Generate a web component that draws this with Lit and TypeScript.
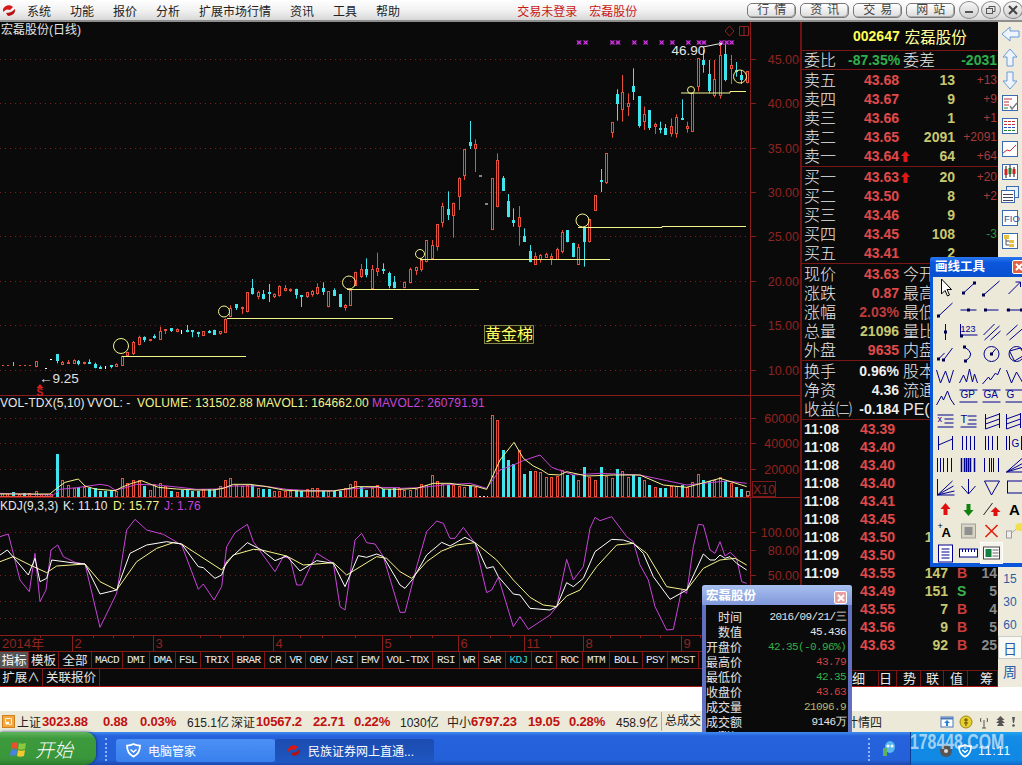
import { LitElement, html, css, svg, nothing } from 'lit';
import { customElement } from 'lit/decorators.js';

// chart data was read from 3x crops, so coordinates are kept in crop units and converted below
type C = [number, number, number, number, number, 'r' | 'c'];

const CANDLES_L: C[] = [
  [107, 484, 484, 500, 502, 'r'], [172, 462, 464, 483, 490, 'c'], [187, 483, 487, 493, 495, 'r'],
  [203, 480, 488, 490, 492, 'r'], [221, 478, 482, 490, 492, 'r'], [235, 480, 484, 491, 496, 'c'],
  [253, 485, 487, 491, 493, 'r'], [268, 478, 487, 490, 492, 'c'], [286, 488, 492, 502, 505, 'c'],
  [301, 497, 502, 505, 507, 'c'], [334, 495, 496, 500, 505, 'c'], [349, 490, 494, 499, 501, 'r'],
  [367, 467, 469, 495, 497, 'r'], [382, 455, 457, 467, 469, 'r'], [400, 423, 427, 460, 465, 'r'],
  [416, 407, 413, 434, 436, 'r'], [433, 409, 412, 417, 426, 'c'], [449, 417, 418, 422, 424, 'r'],
  [463, 403, 410, 413, 416, 'c'], [481, 380, 393, 416, 418, 'r'], [496, 387, 389, 392, 402, 'r'],
  [514, 384, 385, 392, 396, 'c'], [530, 385, 388, 395, 397, 'r'], [562, 375, 390, 393, 397, 'c'],
  [577, 390, 392, 394, 412, 'c'], [595, 395, 397, 400, 411, 'c'], [610, 393, 393, 404, 406, 'r'],
  [628, 390, 393, 395, 400, 'c'], [643, 389, 392, 403, 405, 'c'], [660, 393, 394, 401, 404, 'r'],
  [676, 355, 357, 395, 397, 'r'], [691, 316, 325, 350, 352, 'r'], [709, 312, 314, 323, 330, 'c'],
  [725, 320, 322, 326, 342, 'r'], [742, 278, 278, 335, 337, 'r'], [757, 237, 265, 280, 284, 'c'],
  [775, 272, 277, 290, 298, 'r'], [790, 270, 283, 294, 298, 'c'], [808, 252, 278, 280, 306, 'c'],
  [823, 280, 283, 290, 294, 'r'], [838, 256, 260, 288, 290, 'r'], [856, 255, 264, 270, 274, 'r'],
  [870, 265, 268, 272, 276, 'r'], [889, 266, 268, 282, 296, 'c'], [904, 285, 286, 288, 321, 'c'],
  [922, 276, 278, 290, 294, 'r'], [937, 270, 275, 285, 290, 'r'], [952, 250, 262, 280, 284, 'r'],
  [969, 247, 264, 272, 285, 'c'], [985, 274, 275, 320, 322, 'r'], [1003, 265, 270, 284, 288, 'c'],
  [1019, 282, 284, 320, 322, 'c'], [1036, 312, 315, 320, 332, 'r'], [1051, 268, 270, 315, 316, 'r'],
  [1066, 215, 218, 256, 258, 'r'], [1084, 192, 208, 230, 234, 'r'], [1099, 175, 208, 224, 232, 'c'],
  [1117, 195, 208, 264, 266, 'r'], [1132, 158, 205, 213, 228, 'r'], [1150, 190, 208, 210, 222, 'c'],
  [1166, 215, 220, 255, 265, 'c'], [1183, 228, 248, 262, 265, 'c'],
];

const CANDLES_R: C[] = [
  [13, 785, 787, 803, 805, 'r'], [30, 743, 748, 788, 790, 'r'], [47, 740, 743, 752, 765, 'r'],
  [63, 715, 722, 748, 755, 'r'], [79, 660, 662, 725, 727, 'r'], [96, 660, 676, 714, 716, 'r'],
  [112, 612, 614, 680, 692, 'r'], [127, 548, 558, 605, 622, 'r'], [145, 514, 568, 582, 600, 'c'],
  [160, 548, 550, 587, 653, 'r'], [178, 472, 474, 527, 570, 'r'], [193, 388, 388, 465, 480, 'r'],
  [211, 303, 367, 376, 387, 'c'], [226, 358, 373, 384, 456, 'r'], [275, 475, 476, 628, 630, 'r'],
  [292, 400, 422, 560, 562, 'r'], [308, 468, 474, 510, 512, 'c'], [325, 522, 544, 590, 592, 'c'],
  [340, 565, 600, 607, 620, 'c'], [358, 558, 592, 620, 677, 'r'], [373, 625, 648, 662, 664, 'c'],
  [389, 675, 693, 722, 727, 'c'], [406, 697, 709, 733, 735, 'r'], [421, 702, 707, 718, 728, 'r'],
  [439, 698, 702, 710, 713, 'r'], [454, 700, 708, 714, 735, 'r'], [472, 683, 687, 716, 718, 'r'],
  [487, 630, 636, 692, 700, 'r'], [502, 630, 632, 665, 667, 'c'], [520, 668, 670, 708, 712, 'c'],
  [535, 672, 682, 732, 734, 'r'], [553, 622, 624, 662, 740, 'c'], [568, 597, 599, 665, 668, 'r'],
  [586, 526, 526, 571, 573, 'r'], [602, 447, 480, 484, 516, 'c'], [617, 400, 400, 487, 492, 'r'],
  [635, 306, 306, 336, 353, 'r'], [650, 208, 222, 248, 302, 'c'], [667, 165, 216, 268, 305, 'r'],
  [683, 220, 250, 260, 288, 'r'], [700, 145, 198, 212, 240, 'c'], [716, 228, 230, 318, 323, 'c'],
  [733, 260, 283, 303, 330, 'r'], [748, 270, 270, 320, 330, 'c'], [764, 308, 314, 320, 342, 'r'],
  [780, 305, 326, 328, 340, 'c'], [796, 312, 324, 342, 344, 'c'], [813, 295, 320, 340, 350, 'r'],
  [829, 283, 292, 340, 353, 'r'], [847, 238, 296, 298, 300, 'c'], [862, 305, 320, 325, 338, 'r'],
  [877, 218, 220, 334, 336, 'r'], [895, 114, 116, 200, 214, 'r'], [910, 90, 120, 132, 158, 'c'],
  [928, 120, 162, 210, 220, 'c'], [943, 120, 177, 226, 232, 'r'], [961, 75, 105, 226, 236, 'r'],
  [976, 70, 102, 176, 184, 'c'], [992, 105, 135, 144, 192, 'r'], [1008, 126, 150, 152, 170, 'c'],
  [1024, 150, 165, 177, 192, 'c'], [1042, 153, 155, 188, 190, 'r'],
];

type V = [number, number, 'r' | 'c'];
const VOL_L: V[] = [
  [5, 310, 'r'], [22, 310, 'r'], [40, 308, 'c'], [57, 312, 'r'], [72, 310, 'c'], [87, 310, 'r'], [107, 305, 'r'],
  [122, 312, 'r'], [137, 312, 'r'], [152, 312, 'r'], [172, 192, 'c'], [187, 270, 'r'], [203, 285, 'r'],
  [221, 295, 'r'], [235, 292, 'c'], [253, 292, 'r'], [268, 295, 'c'], [286, 295, 'c'], [301, 303, 'c'],
  [315, 303, 'c'], [334, 300, 'c'], [349, 303, 'r'], [367, 265, 'r'], [382, 280, 'r'], [400, 272, 'r'],
  [416, 272, 'r'], [433, 288, 'c'], [449, 300, 'r'], [463, 282, 'r'], [481, 280, 'r'], [496, 290, 'r'],
  [514, 305, 'c'], [530, 308, 'r'], [545, 302, 'c'], [562, 302, 'c'], [577, 303, 'c'], [595, 305, 'c'],
  [610, 298, 'r'], [628, 298, 'c'], [643, 298, 'c'], [660, 290, 'r'], [676, 270, 'r'], [691, 265, 'r'],
  [709, 285, 'r'], [725, 290, 'r'], [742, 285, 'r'], [757, 285, 'c'], [775, 295, 'r'], [790, 298, 'c'],
  [808, 298, 'c'], [823, 305, 'r'], [838, 305, 'r'], [856, 305, 'r'], [870, 305, 'r'], [889, 300, 'c'],
  [904, 303, 'c'], [922, 298, 'r'], [937, 295, 'r'], [952, 295, 'r'], [969, 305, 'c'], [985, 305, 'r'],
  [1003, 305, 'c'], [1019, 305, 'c'], [1036, 295, 'r'], [1051, 283, 'r'], [1066, 273, 'r'], [1084, 292, 'c'],
  [1099, 300, 'c'], [1117, 295, 'r'], [1132, 285, 'r'], [1150, 298, 'c'], [1166, 298, 'c'], [1183, 296, 'c'],
  [1198, 296, 'r'],
];
const VOL_R: V[] = [
  [13, 300, 'r'], [30, 300, 'r'], [47, 298, 'r'], [63, 283, 'r'], [79, 285, 'r'], [96, 255, 'r'], [112, 275, 'r'],
  [127, 283, 'r'], [145, 285, 'c'], [160, 285, 'r'], [178, 288, 'r'], [193, 292, 'r'], [211, 288, 'c'],
  [226, 292, 'r'], [275, 75, 'r'], [292, 90, 'r'], [308, 180, 'c'], [325, 210, 'c'], [340, 222, 'c'],
  [358, 180, 'r'], [373, 252, 'c'], [389, 245, 'c'], [406, 245, 'r'], [421, 248, 'r'], [439, 263, 'r'],
  [454, 263, 'r'], [472, 258, 'r'], [487, 240, 'r'], [502, 255, 'c'], [520, 255, 'c'], [535, 270, 'r'],
  [553, 232, 'c'], [568, 263, 'r'], [586, 270, 'r'], [602, 232, 'c'], [617, 260, 'r'], [635, 265, 'r'],
  [650, 238, 'c'], [667, 245, 'r'], [683, 262, 'r'], [700, 255, 'c'], [716, 263, 'c'], [733, 272, 'r'],
  [748, 285, 'c'], [764, 292, 'r'], [780, 295, 'c'], [796, 295, 'c'], [813, 288, 'r'], [829, 288, 'r'],
  [847, 285, 'c'], [862, 292, 'r'], [877, 277, 'r'], [895, 252, 'r'], [910, 270, 'c'], [928, 275, 'c'],
  [943, 270, 'r'], [961, 262, 'r'], [976, 275, 'c'], [992, 280, 'r'], [1008, 293, 'c'], [1024, 297, 'c'],
  [1042, 305, 'r'],
];

type P = [number, number][];
const VOL_YELLOW_L: P = [[0,312],[150,312],[170,295],[195,277],[235,267],[255,288],[285,297],[345,302],[365,292],[395,280],[425,272],[445,280],[475,292],[530,297],[590,300],[640,300],[670,295],[700,283],[750,283],[800,290],[850,300],[900,303],[1000,303],[1050,295],[1070,290],[1135,290],[1150,297],[1200,298]];
const VOL_MAGENTA_L: P = [[0,310],[160,315],[180,298],[230,293],[300,283],[325,287],[345,300],[370,295],[410,283],[470,285],[540,292],[590,298],[650,297],[700,288],[790,288],[860,298],[930,302],[1000,302],[1060,296],[1130,292],[1200,293]];
const VOL_YELLOW_R: P = [[0,298],[50,295],[100,280],[150,280],[185,285],[225,288],[260,298],[300,210],[342,157],[370,205],[400,228],[425,240],[445,253],[480,255],[500,245],[560,258],[640,255],[720,255],[790,285],[860,292],[960,265],[1040,290]];
const VOL_MAGENTA_R: P = [[0,295],[60,293],[130,285],[210,280],[260,295],[300,240],[340,225],[370,212],[420,195],[455,232],[520,255],[600,250],[720,255],[800,272],[860,285],[980,273],[1040,280]];

const J_L: P = [[0,440],[25,432],[60,570],[88,605],[105,490],[120,635],[138,600],[153,480],[173,465],[190,500],[225,517],[255,522],[300,712],[350,610],[380,420],[405,388],[440,420],[490,433],[545,465],[595,598],[610,582],[642,630],[665,590],[680,470],[705,428],[742,403],[760,455],[825,545],[850,500],[870,505],[890,585],[905,585],[950,490],[1000,520],[1020,650],[1035,660],[1065,450],[1085,430],[1100,458],[1125,462],[1150,500],[1200,667]];
const K_L: P = [[0,495],[22,480],[85,555],[105,505],[120,575],[140,565],[155,510],[230,520],[255,522],[300,612],[350,600],[390,490],[440,465],[500,455],[545,462],[595,530],[610,533],[645,565],[665,555],[680,515],[742,458],[785,480],[825,512],[860,498],[900,543],[950,512],[1000,520],[1035,590],[1075,497],[1100,502],[1130,492],[1150,500],[1200,585]];
const D_L: P = [[0,515],[40,500],[90,525],[140,548],[170,528],[255,522],[300,575],[350,600],[410,515],[470,475],[520,458],[545,462],[665,540],[700,495],[760,478],[785,480],[860,498],[910,525],[1000,518],[1040,555],[1130,500],[1160,505],[1200,545]];
const J_R: P = [[0,667],[15,667],[50,530],[80,425],[110,393],[130,400],[150,445],[165,445],[190,412],[225,460],[260,608],[275,600],[295,562],[340,710],[360,680],[385,718],[450,675],[470,650],[500,508],[520,570],[550,530],[570,415],[585,382],[600,392],[635,380],[680,440],[700,455],[720,525],[745,570],[765,650],[800,720],[820,718],[845,600],[860,610],[880,470],[895,403],[910,405],[930,480],[945,490],[960,455],[975,498],[990,487],[1010,505],[1025,575],[1040,580]];
const K_R: P = [[0,585],[15,595],[40,565],[80,495],[125,457],[150,468],[195,442],[225,458],[260,535],[280,530],[295,560],[340,612],[360,615],[390,655],[450,660],[470,650],[500,578],[520,590],[550,565],[585,485],[635,448],[670,450],[700,460],[730,490],[760,560],[810,628],[860,600],[910,492],[930,510],[945,510],[960,495],[975,505],[990,500],[1010,520],[1040,540]];
const D_R: P = [[0,545],[35,565],[80,515],[125,483],[170,465],[225,458],[290,510],[340,570],[390,622],[430,645],[470,650],[500,618],[540,600],[590,530],[650,465],[700,460],[740,490],[800,590],[860,600],[910,535],[960,510],[1005,505],[1040,525]];

const pts = (p: P, ox: number, oy: number) => p.map(([x, y]) => `${ox + x / 3},${oy + y / 3}`).join(' ');

const RED = '#e8503c';
const CYAN = '#3fe4ec';
const YEL = '#f4f48c';
const MAG = '#c844d8';
const AXIS = '#8a1c1c';

// strokes sit on half pixels so the hollow bars stay as bright as in the reference
function candle([zx, wt, bt, bb, wb, col]: C, ox: number, oy: number) {
  const x = Math.round(ox + zx / 3) + 0.5;
  const c = col === 'r' ? RED : CYAN;
  const top = Math.floor(oy + bt / 3) + 0.5;
  const h = Math.max(Math.round((bb - bt) / 3), 1);
  return svg`
    <line x1=${x} x2=${x} y1=${oy + wt / 3} y2=${oy + wb / 3} stroke=${c} />
    ${col === 'r'
      ? svg`<rect x=${x - 1} y=${top} width="2" height=${h} fill="#0a0a0a" stroke=${c} />`
      : svg`<rect x=${x - 1.5} y=${top - 0.5} width="3" height=${h + 1} fill=${c} />`}
  `;
}

function volBar([zx, top, col]: V, ox: number) {
  const x = Math.round(ox + zx / 3) + 0.5;
  const y = Math.floor(390 + top / 3) + 0.5;
  const h = 496.5 - y;
  return col === 'r'
    ? svg`<rect x=${x - 1} y=${y} width="2" height=${h} fill="#0a0a0a" stroke=${RED} />`
    : svg`<rect x=${x - 1.5} y=${y - 0.5} width="3" height=${h + 1} fill=${CYAN} />`;
}

const PRICE_AXIS: [string, number][] = [['45.00', 59.5], ['40.00', 103.5], ['35.00', 148.5], ['30.00', 192.5], ['25.00', 236.5], ['20.00', 281.5], ['15.00', 325.5], ['10.00', 370.5]];
const VOL_AXIS: [string, number][] = [['60000', 418.5], ['40000', 443.5], ['20000', 469.5]];
const KDJ_AXIS: [string, number][] = [['100.00', 532.5], ['80.00', 550.5], ['50.00', 575.5]];
const MONTHS: [string, number][] = [['2', 72.5], ['3', 153.5], ['4', 273.5], ['5', 382.5], ['6', 458.5], ['11', 524.5], ['8', 583.5], ['9', 681.5]];
const CROSSES = [537, 557, 637, 654, 703, 737, 785, 817, 865, 897, 912, 965, 980, 995];

@customElement('chart-view')
export class ChartView extends LitElement {
  static styles = css`
    :host { display: block; width: 800px; height: 629px; }
    svg { display: block; font-family: "Liberation Sans", "Noto Sans CJK SC", sans-serif; }
    .axis { fill: #8f2420; font-size: 12.5px; text-anchor: end; }
    .info { font-size: 12px; letter-spacing: 0.1px; }
    .poly { fill: none; stroke-width: 1; }
    .grid { stroke: #7a2020; stroke-dasharray: 1 4; }
  `;

  render() {
    return html`<svg width="800" height="629" viewBox="0 22 800 629">
      <rect x="0" y="22" width="800" height="629" fill="#0a0a0a" />
      ${[...PRICE_AXIS, ...VOL_AXIS, ...KDJ_AXIS, ['', 601.5] as [string, number], ['', 618.5] as [string, number]].map(([, y]) =>
        svg`<line class="grid" x1="0" x2="750" y1=${y} y2=${y} />`)}
      <line x1="0" x2="800" y1="395.5" y2="395.5" stroke=${AXIS} />
      <line x1="0" x2="800" y1="497.5" y2="497.5" stroke=${AXIS} />
      <line x1="0" x2="800" y1="635.5" y2="635.5" stroke=${AXIS} />
      <line x1="750.5" x2="750.5" y1="22" y2="636" stroke=${AXIS} />

      ${[...PRICE_AXIS, ...VOL_AXIS, ...KDJ_AXIS].map(([t, y]) => svg`
        <line x1="751" x2="756" y1=${y} y2=${y} stroke=${AXIS} />
        <text class="axis" x="799" y=${y + 4.5}>${t}</text>`)}

      <text x="1" y="34" fill="#e4e4e4" font-size="12">宏磊股份(日线)</text>

      ${[5, 22, 57, 72, 87].map((zx) => svg`<rect x=${Math.round(zx / 3)} y="365" width="2" height="1" fill=${RED} />`)}
      <line x1="13.5" x2="13.5" y1="362" y2="366" stroke=${CYAN} />
      <rect x="50" y="359" width="2" height="1" fill="#fff" />
      <rect x="45" y="368" width="2" height="1" fill="#fff" />
      <rect x="105" y="366" width="1" height="3" fill="#fff" />
      <rect x="181" y="330" width="1" height="4" fill="#fff" />
      <rect x="479" y="175.5" width="3" height="1" fill="#fff" />
      <rect x="485" y="203.5" width="3" height="1" fill="#fff" />
      ${CANDLES_L.map((c) => candle(c, 0, 200))}
      ${CANDLES_R.map((c) => candle(c, 400, 20))}

      <g fill="none" stroke=${YEL}>
        <line x1="122" x2="246" y1="356.5" y2="356.5" />
        <line x1="227" x2="393" y1="318.5" y2="318.5" />
        <line x1="347" x2="479" y1="289.5" y2="289.5" />
        <line x1="420" x2="610" y1="259.5" y2="259.5" />
        <path d="M578 227.5H662V226.5H746" />
        <path d="M681 93H730V91.5H746" />
        <circle cx="121" cy="346" r="7.5" />
        <circle cx="224" cy="311.5" r="5.5" />
        <circle cx="349" cy="282.5" r="6.5" />
        <circle cx="420" cy="254" r="4.5" />
        <circle cx="582.5" cy="220.5" r="6.5" />
        <circle cx="691" cy="90" r="3.5" />
        <circle cx="740" cy="76.5" r="6.5" />
      </g>

      ${CROSSES.map((z) => {
        const x = 400 + z / 3;
        return svg`<rect x=${x - 2} y="40.5" width="4" height="4" fill="#8a1a9a" />
          <path d="M${x - 2} 40.5l4 4m0 -4l-4 4" stroke="#e040f0" fill="none" />`;
      })}
      <text x="671.500" y="54.500" fill="#e8e8e8" font-size="13.500">46.90</text>
      <path d="M703 47L718 44H722M719 42.5l3 1.5l-3 1.5" stroke="#e8e8e8" fill="none" />
      <path d="M729.5 26l4.5 5l-4.5 5l-4.5-5z" stroke="#8f2420" fill="none" />
      <path d="M739.5 26.5h9v9h-9zM744 26.5v9" stroke="#8f2420" fill="none" />

      <text x="39" y="383" fill="#e0e0e0" font-size="13.500">←9.25</text>
      <path d="M40 384l3.5 4h-7z" fill="#d02020" />
      <text x="36.5" y="396" fill="#d02020" font-size="10" font-weight="700">S</text>
      <g>
        <rect x="484.5" y="325.5" width="49" height="18" fill="#141400" stroke="#b8b870" stroke-width="0.7" />
        <text x="485" y="340" fill="#ffff66" font-size="16">黄金梯</text>
      </g>

      <!-- volume pane -->
      <g class="info">
        <text x="0" y="407" fill="#e8e8e8">VOL-TDX(5,10)</text>
        <text x="87" y="407" fill="#e8e8e8">VVOL: -</text>
        <text x="137" y="407" fill=${YEL}>VOLUME: 131502.88</text>
        <text x="256" y="407" fill=${YEL}>MAVOL1: 164662.00</text>
        <text x="372" y="407" fill=${MAG}>MAVOL2: 260791.91</text>
      </g>
      ${VOL_L.map((v) => volBar(v, 0))}
      ${VOL_R.map((v) => volBar(v, 400))}
      <line x1="0" x2="52" y1="496.5" y2="496.5" stroke=${RED} />
      <path d="M479 496.5h9" stroke="#ddd" stroke-dasharray="2 2" />
      <rect x="746.5" y="491.5" width="3" height="4" fill="#0a0a0a" stroke="#ddd" stroke-dasharray="1 1" />
      <polyline class="poly" stroke=${MAG} points=${pts(VOL_MAGENTA_L, 0, 390)} />
      <polyline class="poly" stroke=${MAG} points=${pts(VOL_MAGENTA_R, 400, 390)} />
      <polyline class="poly" stroke=${YEL} points=${pts(VOL_YELLOW_L, 0, 390)} />
      <polyline class="poly" stroke=${YEL} points=${pts(VOL_YELLOW_R, 400, 390)} />
      <rect x="752.5" y="481.5" width="23" height="15" fill="none" stroke="#7a1a1a" />
      <text x="753" y="494" fill="#8f2420" font-size="12.5">X10</text>

      <!-- kdj pane -->
      <g class="info">
        <text x="0" y="510" fill="#e8e8e8">KDJ(9,3,3)</text>
        <text x="63" y="510" fill="#e8e8e8">K: 11.10</text>
        <text x="113" y="510" fill=${YEL}>D: 15.77</text>
        <text x="164" y="510" fill=${MAG}>J: 1.76</text>
      </g>
      <polyline class="poly" stroke=${MAG} points=${pts(J_L, 0, 390)} />
      <polyline class="poly" stroke=${MAG} points=${pts(J_R, 400, 390)} />
      <polyline class="poly" stroke=${YEL} points=${pts(D_L, 0, 390)} />
      <polyline class="poly" stroke=${YEL} points=${pts(D_R, 400, 390)} />
      <polyline class="poly" stroke="#fff" points=${pts(K_L, 0, 390)} />
      <polyline class="poly" stroke="#fff" points=${pts(K_R, 400, 390)} />

      <!-- date axis -->
      <text x="2" y="648" fill="#8f2420" font-size="13">2014年</text>
      ${MONTHS.map(([t, x]) => svg`
        <line x1=${x} x2=${x} y1="636" y2="651" stroke=${AXIS} />
        <text x=${x + 2} y="648" fill="#8f2420" font-size="13">${t}</text>`)}
      ${[40.5, 93.5, 113.5, 133.5, 200.5, 220.5, 243.5, 300.5, 322.5, 355.5, 410.5, 432.5, 490.5, 510.5, 550.5, 610.5, 640.5, 660.5, 700.5, 720.5].map((x) =>
        svg`<line x1=${x} x2=${x} y1="636" y2="638" stroke=${AXIS} />`)}
    </svg>`;
  }
}

const TABS: [string, number][] = [
  ['指标', 29], ['模板', 30], ['全部', 33], ['MACD', 31], ['DMI', 27], ['DMA', 26], ['FSL', 25], ['TRIX', 32], ['BRAR', 32],
  ['CR', 21], ['VR', 20], ['OBV', 26], ['ASI', 26], ['EMV', 25], ['VOL-TDX', 50], ['RSI', 27], ['WR', 19], ['SAR', 27],
  ['KDJ', 26], ['CCI', 25], ['ROC', 26], ['MTM', 27], ['BOLL', 33], ['PSY', 25], ['MCST', 31],
];

const SELLS = [
  ['卖五', '43.68', '', '13', '+13', ''], ['卖四', '43.67', '', '9', '+9', ''], ['卖三', '43.66', '', '1', '+1', ''],
  ['卖二', '43.65', '', '2091', '+2091', ''], ['卖一', '43.64', 'up', '64', '+64', ''],
];
const BUYS = [
  ['买一', '43.63', 'up', '20', '+20', ''], ['买二', '43.50', '', '8', '+2', ''], ['买三', '43.46', '', '9', '', ''],
  ['买四', '43.45', '', '108', '-3', 'g'], ['买五', '43.41', '', '2', '', ''],
];
const STATS = [
  ['现价', '43.63', 'red', '今开'], ['涨跌', '0.87', 'red', '最高'], ['涨幅', '2.03%', 'dim', '最低'],
  ['总量', '21096', 'khaki', '量比'], ['外盘', '9635', 'red', '内盘'],
];
const STATS2 = [['换手', '0.96%', '股本'], ['净资', '4.36', '流通'], ['收益㈡', '-0.184', 'PE(动)']];
// the last rows have their time column under the floating window, so it is left empty
const TICKS = [
  ['11:08', '43.39', '', '', ''], ['11:08', '43.40', '', '', ''], ['11:08', '43.40', '', '', ''], ['11:08', '43.40', '', '', ''],
  ['11:08', '43.41', '', '', ''], ['11:08', '43.45', '', '', ''], ['11:08', '43.50', '108', '', ''], ['11:09', '43.50', '', '', ''],
  ['11:09', '43.55', '147', 'B', '14'], ['', '43.49', '151', 'S', '5'], ['', '43.55', '7', 'B', '4'],
  ['', '43.56', '9', 'B', '5'], ['', '43.63', '92', 'B', '25'],
];
const PANEL_TABS: [string, number][] = [['细', 77], ['日', 18], ['势', 24], ['联', 23], ['值', 24], ['筹', 30]];

// right hand vertical toolbar, top to bottom
const SIDE_ICONS = [
  svg`<path d="M3 11l8-7v4h9v6h-9v4z" fill="#eef4fc" stroke="#6a9ad8" />`,
  svg`<path d="M11 3l7 8h-4v9H8v-9H4z" fill="#eef4fc" stroke="#6a9ad8" />`,
  svg`<path d="M11 20l-7-8h4V3h6v9h4z" fill="#eef4fc" stroke="#6a9ad8" />`,
  svg`<rect x="3.500" y="3.500" width="15" height="15" fill="#fff" stroke="#3a6ab0" /><path d="M5 7h8M5 10h5M5 13h5" stroke="#c03030" /><path d="M5 16h4" stroke="#208030" /><path d="M11 14l2 3 5-6" stroke="#808080" fill="none" stroke-width="1.5" />`,
  svg`<rect x="3.500" y="3.500" width="15" height="15" fill="#fff" stroke="#3a6ab0" /><path d="M5 6.500h12M5 9.500h12" stroke="#c03030" stroke-dasharray="3 1" /><path d="M5 12.500h12" stroke="#3050c0" stroke-dasharray="3 1" /><path d="M5 15.500h12" stroke="#208030" stroke-dasharray="3 1" />`,
  svg`<rect x="3.500" y="3.500" width="15" height="15" fill="#fff" stroke="#3a6ab0" /><path d="M4 15l4-3 3 1 6-6" fill="none" stroke="#d03030" />`,
  svg`<rect x="3.500" y="3.500" width="15" height="15" fill="#fff" stroke="#3a6ab0" /><path d="M7 5v12M11 4v12M15 6v10" stroke="#111" /><rect x="5.5" y="8" width="3" height="6" fill="#d02020" /><rect x="9.5" y="7" width="3" height="6" fill="#208030" /><rect x="13.5" y="8" width="3" height="5" fill="#d02020" />`,
  svg`<rect x="7.500" y="2.500" width="12" height="11" fill="#e8f0fa" stroke="#3a6ab0" /><rect x="2.500" y="6.500" width="13" height="12" fill="#fff" stroke="#3a6ab0" /><path d="M4 10.500h10M4 13.500h10M4 16.500h10" stroke="#445" />`,
  svg`<rect x="3.500" y="3.500" width="15" height="15" fill="#fff" stroke="#3a6ab0" /><text x="5" y="15" font-size="9.500" fill="#1a55a8" font-family="Liberation Sans">FIO</text>`,
  svg`<rect x="3.500" y="3.500" width="15" height="15" fill="#fff" stroke="#3a6ab0" /><rect x="5" y="5" width="5" height="4" fill="#e8c040" /><rect x="10" y="10" width="5" height="3" fill="#e8c040" /><rect x="10" y="14" width="5" height="3" fill="#e8c040" /><path d="M7 9v6h3M7 11h3" stroke="#555" fill="none" />`,
];

const BLUE = '#000090';
const dot = (x: number, y: number) => svg`<rect x=${x - 1.5} y=${y - 1.5} width="3" height="3" fill="#000050" stroke="none" />`;
const lab = (t: string, x = 3, y = 10, size = 9) => svg`<text x=${x} y=${y} font-size=${size} fill=${BLUE} stroke="none" font-family="Liberation Sans">${t}</text>`;
const vbars = (xs: number[]) => svg`<path d=${xs.map((x) => `M${x} 4V18`).join('')} />`;

const DRAW_ICONS = [
  svg`<path d="M7 2v15l3.5-3.5 2.5 5.5 2-1-2.5-5.5H17z" fill="#fff" stroke="#000" />`,
  svg`<path d="M6 16L17 6" />${dot(6, 16)}${dot(17, 6)}`,
  svg`<path d="M3 18L19 4" />${dot(3, 18)}`,
  svg`<path d="M5 17L17 5M12 5h5v5" />`,
  svg`<path d="M3 18L18 4" />${dot(4, 17)}`,
  svg`<path d="M3 11H19" />${dot(11, 11)}`,
  svg`<path d="M4 11H18" />${dot(5, 11)}`,
  svg`<path d="M3 11H19" />${dot(5, 11)}${dot(18, 11)}`,
  svg`<path d="M11 3V19" />${dot(11, 11)}`,
  svg`${lab('123', 3, 11, 9)}<path d="M3 14H20M3 3V14" />${dot(4, 15)}`,
  svg`<path d="M3 14L14 3M4 19L19 5M10 19L20 10" />`,
  svg`<path d="M3 14L14 4M6 19L21 6" />`,
  svg`<path d="M3 17L10 10M9 17L18 5" />${dot(4, 16)}${dot(9, 17)}`,
  svg`<path d="M7 4Q19 11 8 18" />${dot(7, 4)}${dot(8, 18)}`,
  svg`<circle cx="11" cy="11" r="7.5" /><path d="M11 11L15 6" />${dot(11, 11)}`,
  svg`<circle cx="13" cy="11" r="7.5" /><path d="M6 8L17 5L21 12L11 18z" />`,
  svg`<path d="M2 5L6 18L11 6L15 18L19 5" />`,
  svg`<path d="M2 18L6 10L9 17L12 4L15 17L17 9L20 18" />`,
  svg`<path d="M2 19L8 12L10 15L15 8L17 10L20 3" />`,
  svg`<path d="M3 5L8 18L13 7L20 19" />`,
  svg`<path d="M2 18L7 9L9 13L13 4L16 12L20 18" />`,
  svg`${lab('GP', 3, 11, 10)}<path d="M2 3H20M2 15H20" />`,
  svg`${lab('GA', 3, 11, 10)}<path d="M2 3H20M2 15H20" />`,
  svg`${lab('G', 3, 11, 10)}<path d="M2 3H20M2 15H20" />`,
  svg`${lab('x', 3, 12, 9)}<path d="M3 5H19M10 9H19M10 13H19M3 17H19" />`,
  svg`${lab('T', 3, 13, 11)}<path d="M10 6H19M11 10H19M10 14H19M3 17H19" />`,
  svg`<path d="M5 4V19M19 3V18M5 9L19 4M5 14L19 9M5 19L19 14" />`,
  svg`<path d="M3 4V19M17 3V18M3 9L17 4M3 14L17 9M3 19L17 14" />`,
  svg`<path d="M4 4V18M18 4V18M4 13L18 7" />`,
  vbars([5, 9, 13, 17]),
  vbars([5, 8, 12, 17]),
  svg`<path d="M3 4V18M6 4V18M18 4V18" />${lab('G', 8, 15, 10)}`,
  vbars([3, 6, 9, 13, 17]),
  svg`<path d="M4 4V18M7 4V18M9 4V18M11 4V18M13 4V18M17 4V18" stroke-width="1.5" />`,
  vbars([4, 9, 11, 13, 18]),
  svg`<path d="M3 18L19 4M3 18L20 9M3 18L20 13M3 18H19" />`,
  svg`<path d="M3 3V19H20M3 19L18 5M3 19L19 10M3 19L20 15" />`,
  svg`<path d="M11 3V18M4 10L11 18L18 10" />`,
  svg`<path d="M4 5H19L11 19Z" />`,
  svg`<rect x="4" y="5" width="15" height="12" />`,
  svg`<path d="M11 5L16 11H13V17H9V11H6Z" fill="#e01010" stroke="none" />`,
  svg`<path d="M11 18L16 12H13V6H9V12H6Z" fill="#108010" stroke="none" />`,
  svg`<path d="M3 17L12 5" stroke="#222" /><path d="M15 9L20 14H17V18H13V14H10Z" fill="#e01010" stroke="none" />`,
  svg`<text x="5.5" y="17" font-size="15" font-weight="700" fill="#000" stroke="none" font-family="Liberation Sans">A</text>`,
  svg`<text x="3" y="9" font-size="9" fill="#000" stroke="none" font-family="Liberation Sans">+</text><text x="7" y="17" font-size="13" font-weight="700" fill="#000" stroke="none" font-family="Liberation Sans">A</text>`,
  svg`<rect x="4" y="4" width="14" height="14" fill="#d8d4c4" stroke="#a0a0a0" /><rect x="7" y="7" width="8" height="8" fill="#909090" stroke="none" />`,
  svg`<path d="M5 5L17 17M17 5L5 17" stroke="#e02010" stroke-width="1.6" />`,
  svg`<rect x="3" y="11" width="5" height="7" fill="#eee" stroke="#999" /><path d="M8 13L14 8" stroke="#aaa" /><circle cx="16" cy="7" r="4" fill="#f0e050" stroke="none" />`,
  svg`<rect x="4" y="3" width="14" height="17" fill="#fff" /><path d="M7 7H15M7 10H15M7 13H15M7 16H15" />`,
  svg`<rect x="2" y="7" width="18" height="8" fill="#fff" /><path d="M5 7v3M8 7v3M11 7v3M14 7v3M17 7v3" />`,
  svg`<rect x="3" y="5" width="16" height="12" fill="#fff" stroke="#444" /><rect x="5" y="7" width="6" height="8" fill="#128040" stroke="none" /><path d="M12 8H18M12 11H18M12 14H18" stroke="#666" />`,
];

const LOGO = svg`<path d="M1 5C3 1 8 0 11 3L8 6C6 5 4 5 1 8Z" fill="#d81818" /><path d="M13 5C14 8 11 12 6 12L4 9C7 9 10 8 13 5Z" fill="#b81010" />`;

const STATUS: [number, string, string][] = [
  [17, '上证', ''], [42, '3023.88', 'num'], [103, '0.88', 'num'], [140, '0.03%', 'num'], [187, '615.1亿', ''],
  [231, '深证', ''], [256, '10567.2', 'num'], [313, '22.71', 'num'], [354, '0.22%', 'num'], [400, '1030亿', ''],
  [447, '中小', ''], [471, '6797.23', 'num'], [528, '19.05', 'num'], [569, '0.28%', 'num'], [616, '458.9亿', ''],
  [661, '总成交', 'sep'], [846, '计情四', ''], [940, '', ''],
];

const TIP_ROWS = [
  ['时间', '2016/09/21/三', ''], ['数值', '45.436', ''], ['开盘价', '42.35(-0.96%)', 'g'], ['最高价', '43.79', 'r'],
  ['最低价', '42.35', 'g'], ['收盘价', '43.63', 'r'], ['成交量', '21096.9', 'y'], ['成交额', '9146万', ''], ['涨幅', '0.87(2.03%)', 'r'],
];

@customElement('app-root')
export class AppRoot extends LitElement {
  static styles = css`
    :host {
      display: flex;
      flex-direction: column;
      position: relative;
      width: 1022px;
      height: 765px;
      overflow: hidden;
      font-family: "Liberation Sans", "Noto Sans CJK SC", sans-serif;
      background: #fff;
    }

    /* top menu */
    .menu {
      height: 22px;
      box-sizing: border-box;
      display: flex;
      align-items: center;
      background: linear-gradient(#ffffff, #f2f2f2 50%, #d8d8d8);
      border-bottom: 2px solid #8e8e8e;
      font-size: 12px;
      color: #222;
      padding-left: 2px;
      white-space: nowrap;
    }
    .logo { width: 14px; height: 13px; margin-right: 11px; flex: none; }
    .menu-items { display: flex; gap: 19px; flex: none; }
    .notice { color: #c81818; margin-left: 117px; flex: none; }
    .notice + .notice { margin-left: 12px; }
    .btns { display: flex; gap: 4px; margin-left: 110px; flex: none; }
    .btn {
      width: 49px;
      height: 15px;
      box-sizing: border-box;
      border: 1px solid #777;
      border-radius: 5px;
      background: linear-gradient(#fff, #dcdcdc);
      color: #444;
      font-size: 12px;
      line-height: 13px;
      text-align: center;
      letter-spacing: 5px;
      text-indent: 5px;
      box-shadow: inset -1px -1px 0 #aaa;
    }
    .rounds { display: flex; gap: 2px; margin-left: 4px; flex: none; }
    .round {
      width: 20px;
      height: 18px;
      box-sizing: border-box;
      border: 1px solid #888;
      border-radius: 50%;
      background: linear-gradient(#f6f6f6, #d0d0d0);
    }
    .round svg { display: block; margin: 2px auto 0; }

    /* main area */
    .main { height: 665px; display: flex; background: #0a0a0a; }
    .left { width: 800px; display: flex; flex-direction: column; }
    .tabrow { display: flex; height: 17px; box-sizing: border-box; border-top: 1px solid #8a1c1c; }
    .tabrow.second { height: 19px; border-bottom: 1px solid #b01818; }
    .tab {
      box-sizing: border-box;
      border-right: 1px solid #7a1616;
      color: #e6e6e6;
      font-family: "Liberation Mono", monospace;
      font-size: 11px;
      letter-spacing: -0.6px;
      line-height: 16px;
      text-align: center;
      white-space: nowrap;
    }
    .tab.cjk { font-family: "Noto Sans CJK SC", sans-serif; font-size: 12.5px; letter-spacing: 0; }
    .tab.on { background: #555; color: #fff; }
    .tab.kdj { color: #3fd0d0; }

    .panel {
      width: 198px;
      box-sizing: border-box;
      border-left: 2px solid #6e1212;
      display: flex;
      flex-direction: column;
      position: relative;
      font-size: 14px;
      color: #e8e8e8;
    }
    .head {
      height: 29px;
      flex: none;
      box-sizing: border-box;
      border-bottom: 1px solid #7a1616;
      display: flex;
      align-items: center;
      padding-left: 51px;
      gap: 5px;
      color: #ffff99;
      font-size: 15.5px;
    }
    .code { font-weight: 700; font-size: 14px; color: #ffff55; }
    .sec { border-bottom: 1px solid #7a1616; padding-top: 1px; }
    .row {
      height: 19px;
      display: grid;
      grid-template-columns: 44px 51px 13px 43px 42px;
      padding-left: 2px;
      align-items: center;
      line-height: 19px;
      white-space: nowrap;
    }
    .row.wei { height: 18px; border-bottom: 1px solid #7a1616; grid-template-columns: 44px 51px 36px 62px; }
    .row.stat { grid-template-columns: 44px 51px 60px; }
    .lb { font-size: 16px; font-weight: 300; letter-spacing: 0; }
    .lb2 { font-size: 16px; font-weight: 300; padding-left: 4px; }
    .v { text-align: right; }
    .b { font-weight: 700; }
    .red { color: #e04a4a; }
    .dim { color: #c03c3c; }
    .khaki { color: #c8c870; }
    .green { color: #2eb04a; }
    .wh { color: #eee; }
    .delta { color: #a83a3a; font-size: 12px; }
    .delta.green { color: #2e9040; }
    .up { display: block; padding-left: 1px; }
    .up svg { display: block; }
    .tick {
      height: 18px;
      display: grid;
      grid-template-columns: 56px 36px 52px 21px 28px;
      padding-left: 2px;
      align-items: center;
      white-space: nowrap;
      font-weight: 700;
    }
    .side { padding-left: 9px; }
    .sell { color: #3cb44a; }
    .buy { color: #d03c3c; }
    .gray { color: #8a8a8a; }
    .ptabs {
      margin-top: auto;
      height: 17px;
      box-sizing: border-box;
      border-top: 1px solid #7a1616;
      border-bottom: 1px solid #b01818;
      display: flex;
      font-size: 13px;
    }
    .ptab { box-sizing: border-box; border-right: 1px solid #7a1616; text-align: right; padding-right: 4px; line-height: 15px; }
    .ptab.first { padding-right: 13px; }

    /* vertical toolbar */
    .tools {
      width: 24px;
      background: #efebdc;
      display: flex;
      flex-direction: column;
      padding-bottom: 5px;
      box-sizing: border-box;
    }
    .slot { height: 23px; flex: none; display: flex; align-items: center; justify-content: center; color: #2a5ca8; font-size: 12px; }
    .slot svg { display: block; }
    .slot.first-per { margin-top: auto; }
    .slot.day { background: #fafaf4; box-shadow: inset 0 0 0 1px #ccc; font-size: 14px; }
    .slot.week { font-size: 14px; }

    .strip { height: 24px; background: #fff; }

    /* market ticker */
    .status {
      height: 21px;
      display: flex;
      align-items: center;
      background: #ece9d8;
      font-size: 12px;
      color: #222;
      white-space: nowrap;
      position: relative;
    }
    .status .num { color: #c01010; font-weight: 700; font-size: 13px; letter-spacing: -0.15px; }
    .sq { width: 13px; height: 13px; margin: 0 2px; flex: none; background: #f4a83c; border: 1px solid #d08020; box-sizing: border-box; }
    .sep { border-left: 1px solid #aaa; height: 19px; line-height: 19px; padding-left: 3px; box-sizing: border-box; }
    .tray-ico { position: absolute; left: 940px; top: 0; height: 21px; display: flex; align-items: center; gap: 5px; }
    .tray-ico svg { display: block; }

    /* taskbar */
    .task {
      height: 33px;
      display: flex;
      align-items: stretch;
      background: linear-gradient(#3f8cf0, #2662dc 12%, #2460d8 85%, #1c48ac);
      position: relative;
      color: #fff;
      font-size: 12px;
    }
    .start {
      width: 96px;
      box-sizing: border-box;
      border-radius: 0 11px 11px 0;
      background: linear-gradient(#5fb45c, #3c9a3c 20%, #3a963a 80%, #2c7a2c);
      display: flex;
      align-items: center;
      padding-left: 10px;
      gap: 9px;
      font-size: 19px;
      font-weight: 300;
      box-shadow: 1px 0 3px #123c80;
    }
    .start span { display: inline-block; transform: skewX(-14deg); }
    .grip { width: 3px; margin: 6px 6px 4px 9px; border-left: 2px dotted #8cb8f4; }
    .tbtn {
      width: 159px;
      margin: 7px 0 3px;
      box-sizing: border-box;
      border-radius: 3px;
      display: flex;
      align-items: center;
      background: linear-gradient(#4a90f4, #3a80ee);
      padding-left: 10px;
      gap: 7px;
      white-space: nowrap;
    }
    .tbtn.on { background: linear-gradient(#1c4cb0, #1e56c0); padding-left: 12px; }
    .tbtn svg { flex: none; }
    .spacer { flex: 1; }
    .mascot { margin: 8px 14px 0 3px; }
    .tray {
      width: 112px;
      box-sizing: border-box;
      background: linear-gradient(#20a4f0, #128ce6 15%, #1088e4 85%, #1068c8);
      border-left: 1px solid #0a3c90;
      display: flex;
      align-items: center;
      padding: 4px 0 0 28px;
      gap: 5px;
      font-size: 12px;
    }
    .time { margin-left: 1px; letter-spacing: 1px; }
    .mark {
      position: absolute;
      left: 910px;
      top: -1px;
      font-size: 22px;
      font-weight: 700;
      color: rgba(255, 255, 255, 0.62);
      line-height: 22px;
      transform: scaleX(0.72);
      transform-origin: left;
      white-space: nowrap;
    }

    /* floating windows */
    .draw {
      position: absolute;
      left: 930px;
      top: 257px;
      width: 110px;
      height: 310px;
      box-sizing: border-box;
      background: #ece9d8;
      border-left: 3px solid #0a56d8;
      border-bottom: 4px solid #0a56d8;
      border-radius: 3px 0 0 0;
    }
    .draw-title {
      height: 20px;
      margin-left: -3px;
      background: linear-gradient(#2a78f0, #0a56dc 30%, #0a50d0);
      border-radius: 3px 0 0 0;
      color: #fff;
      font-weight: 700;
      font-size: 12.5px;
      line-height: 20px;
      padding-left: 5px;
      position: relative;
    }
    .close {
      position: absolute;
      left: 82px;
      top: 3px;
      width: 14px;
      height: 14px;
      background: #e06048;
      border: 1px solid #fff;
      border-radius: 2px;
      box-sizing: border-box;
    }
    .close svg { display: block; }
    .draw-grid { display: grid; grid-template-columns: repeat(4, 23px); grid-auto-rows: 22.1px; padding-left: 1px; }
    .draw-grid svg { display: block; fill: none; stroke: #000090; stroke-width: 1; }
    .draw-grid .pressed { background: #f6f4ea; box-shadow: inset 0 0 0 1px #fff; }

    .tip {
      position: absolute;
      left: 702px;
      top: 585px;
      width: 150px;
      height: 147px;
      box-sizing: border-box;
      background: #6270c0;
      padding: 0 4px;
      overflow: hidden;
      border-radius: 3px 3px 0 0;
    }
    .tip-title {
      height: 20px;
      margin: 0 -4px;
      background: linear-gradient(#a8c0ee, #8098dc);
      color: #fff;
      font-weight: 700;
      font-size: 12.5px;
      line-height: 22px;
      padding-left: 4px;
      position: relative;
    }
    .tip-close { left: 132px; top: 6px; width: 13px; height: 13px; background: #e8a0a0; position: absolute; border: 1px solid #fff; border-radius: 2px; box-sizing: border-box; }
    .tip-close svg { display: block; }
    .tip-body { background: #0a0a0a; height: 130px; padding-top: 3px; }
    .tip-row { height: 15px; display: grid; grid-template-columns: 36px 105px; align-items: center; white-space: nowrap; color: #e4e4e4; }
    .tip-row .k { font-size: 12px; text-align: right; }
    .tip-row .val { text-align: right; font-family: "Liberation Mono", monospace; font-size: 11px; letter-spacing: -0.6px; padding-right: 1px; }
    .tip-row .val.g { color: #32b048; }
    .tip-row .val.r { color: #d84040; }
    .tip-row .val.y { color: #b8b868; }
  `;

  private renderQuote(r: string[]) {
    return html`<div class="row">
      <span class="lb">${r[0]}</span>
      <span class="v b red">${r[1]}</span>
      <span class="up">${r[2]
        ? html`<svg width="11" height="13" viewBox="0 0 11 13"><path d="M5.500 1L10 6H7.500V12H3.500V6H1Z" fill="#e01818" /></svg>`
        : nothing}</span>
      <span class="v b khaki">${r[3]}</span>
      <span class="v delta ${r[5] === 'g' ? 'green' : ''}">${r[4]}</span>
    </div>`;
  }

  private renderStatus() {
    return STATUS.map(([x, t, cls], i) => {
      if (!t) return nothing;
      const w = STATUS[i + 1][0] - x;
      return html`<span class=${cls} style="width:${w}px">${t}</span>`;
    });
  }

  render() {
    const shield = svg`<path d="M7.5 1C5 2.5 3 2.6 1 2.6c0 5 2 9 6.5 11 4.500-2 6.500-6 6.500-11C12 2.600 10 2.500 7.500 1z" fill="none" stroke="#fff" stroke-width="1.800" /><path d="M4.500 6.500l3 2.500 3-2.500" fill="none" stroke="#fff" stroke-width="1.500" />`;
    const closeX = svg`<path d="M3 3l6 6M9 3l-6 6" stroke="#fff" stroke-width="2" />`;
    return html`
      <div class="menu">
        <svg class="logo" viewBox="0 0 14 13">${LOGO}</svg>
        <div class="menu-items">
          ${['系统', '功能', '报价', '分析', '扩展市场行情', '资讯', '工具', '帮助'].map((m) => html`<span>${m}</span>`)}
        </div>
        <span class="notice">交易未登录</span>
        <span class="notice">宏磊股份</span>
        <div class="btns">${['行情', '资讯', '交易', '网站'].map((b) => html`<div class="btn">${b}</div>`)}</div>
        <div class="rounds">
          <div class="round"><svg width="14" height="12"><path d="M3 8h8" stroke="#555" stroke-width="2" /></svg></div>
          <div class="round"><svg width="14" height="12" fill="none" stroke="#555"><rect x="2.500" y="4.500" width="6" height="5" /><path d="M5 4V2.500h6v5H9" /></svg></div>
          <div class="round"><svg width="14" height="12"><path d="M3 2l8 8M11 2l-8 8" stroke="#444" stroke-width="2" /></svg></div>
        </div>
      </div>

      <div class="main">
        <div class="left">
          <chart-view></chart-view>
          <div class="tabrow">
            ${TABS.map(([t, w], i) => html`<div class="tab ${i < 3 ? 'cjk' : ''} ${i === 0 ? 'on' : ''} ${t === 'KDJ' ? 'kdj' : ''}" style="width:${w}px">${t}</div>`)}
          </div>
          <div class="tabrow second">
            <div class="tab cjk" style="width:43px">扩展∧</div>
            <div class="tab cjk" style="width:57px">关联报价</div>
          </div>
        </div>

        <div class="panel">
          <div class="head"><span class="code">002647</span><span>宏磊股份</span></div>
          <div class="row wei">
            <span class="lb">委比</span><span class="v b green">-87.35%</span>
            <span class="lb2">委差</span><span class="v b green">-2031</span>
          </div>
          <div class="sec">${SELLS.map((r) => this.renderQuote(r))}</div>
          <div class="sec">${BUYS.map((r) => this.renderQuote(r))}</div>
          <div class="sec">
            ${STATS.map((r) => html`<div class="row stat">
              <span class="lb">${r[0]}</span>
              <span class="v b ${r[2]}">${r[1]}</span>
              <span class="lb2">${r[3]}</span>
            </div>`)}
          </div>
          <div class="sec">
            ${STATS2.map((r) => html`<div class="row stat">
              <span class="lb">${r[0]}</span>
              <span class="v b wh">${r[1]}</span>
              <span class="lb2">${r[2]}</span>
            </div>`)}
          </div>
          <div>
            ${TICKS.map((t) => html`<div class="tick">
              <span class="wh">${t[0]}</span>
              <span class="red">${t[1]}</span>
              <span class="v khaki">${t[2]}</span>
              <span class="side ${t[3] === 'S' ? 'sell' : 'buy'}">${t[3]}</span>
              <span class="v gray">${t[4]}</span>
            </div>`)}
          </div>
          <div class="ptabs">
            ${PANEL_TABS.map(([t, w], i) => html`<div class="ptab ${i === 0 ? 'first' : ''}" style="width:${w}px">${t}</div>`)}
          </div>
        </div>

        <div class="tools">
          ${SIDE_ICONS.map((ic) => html`<div class="slot"><svg width="22" height="22" viewBox="0 0 22 22">${ic}</svg></div>`)}
          ${['15', '30', '60'].map((t, i) => html`<div class="slot ${i === 0 ? 'first-per' : ''}">${t}</div>`)}
          <div class="slot day">日</div>
          <div class="slot week">周</div>
        </div>
      </div>

      <div class="strip"></div>

      <div class="status">
        <svg class="sq" viewBox="0 0 13 13"><path d="M3 7V3h7v7H7" fill="none" stroke="#fff" /><rect x="3" y="7" width="4" height="3" fill="#fff" /></svg>
        ${this.renderStatus()}
        <div class="tray-ico">
          <svg width="14" height="14" viewBox="0 0 14 14"><rect x="1" y="2" width="12" height="10" fill="#fff" stroke="#4a78b8" /><path d="M1 3.500h12" stroke="#4a78b8" stroke-width="2" /><path d="M7 5l3 3H8v3H6V8H4z" fill="#2a80d0" /></svg>
          <svg width="14" height="14" viewBox="0 0 14 14"><circle cx="7" cy="7" r="6" fill="#e8d030" stroke="#a08810" /><path d="M5 8h4M5 5h4M7 3v8" stroke="#604800" /></svg>
          <svg width="12" height="14" viewBox="0 0 12 14" fill="none" stroke="#555"><path d="M6 5V13M4 13h4M3 3a4 4 0 0 0 0 4M9 3a4 4 0 0 1 0 4" /></svg>
          <svg width="11" height="13" viewBox="0 0 11 13" fill="#555"><path d="M5.500 1l4 4H7l3 3H7l2 3H2l2-3H1l3-3H1.500z" /></svg>
          <svg width="5" height="13" viewBox="0 0 5 13" fill="#555"><path d="M1 2h3l-1 6H2z" /><circle cx="2.500" cy="10.500" r="1.300" /></svg>
        </div>
      </div>

      <div class="task">
        <div class="start">
          <svg width="18" height="18" viewBox="0 0 18 18">
            <path d="M2 3c2-1 4-1 6 0l-1 6c-2-1-4-1-6 0z" fill="#e85030" />
            <path d="M9 3c2 1 4 1 7 0l-1 6c-3 1-5 1-7 0z" fill="#8cc83c" />
            <path d="M1 10c2-1 4-1 6 0l-1 6c-2-1-4-1-6 0z" fill="#4a80e8" />
            <path d="M8 10c2 1 4 1 7 0l-1 6c-3 1-5 1-7 0z" fill="#f4c830" />
          </svg>
          <span>开始</span>
        </div>
        <div class="grip"></div>
        <div class="tbtn"><svg width="15" height="15" viewBox="0 0 15 15">${shield}</svg><span>电脑管家</span></div>
        <div class="tbtn on"><svg width="14" height="13" viewBox="0 0 14 13">${LOGO}</svg><span>民族证券网上直通...</span></div>
        <div class="spacer"></div>
        <div class="grip"></div>
        <svg class="mascot" width="14" height="17" viewBox="0 0 14 17">
          <ellipse cx="8" cy="7" rx="5" ry="6" fill="#58b8f0" /><circle cx="6" cy="6" r="1.500" fill="#fff" /><circle cx="10" cy="6" r="1.500" fill="#fff" />
          <rect x="1" y="8" width="4" height="8" fill="#60b060" />
        </svg>
        <div class="tray">
          <svg width="14" height="14" viewBox="0 0 14 14"><circle cx="7" cy="7" r="6" fill="#555" /><circle cx="7" cy="7" r="2" fill="#ddd" /></svg>
          <svg width="14" height="14" viewBox="0 0 15 15">${shield}</svg>
          <span class="time">11:11</span>
        </div>
        <div class="mark">178448.COM</div>
      </div>

      <div class="draw">
        <div class="draw-title">画线工具
          <div class="close"><svg width="12" height="12">${closeX}</svg></div>
        </div>
        <div class="draw-grid">
          ${DRAW_ICONS.map((ic, i) => html`<div class=${i === 50 ? 'pressed' : ''}><svg width="23" height="22" viewBox="0 0 22 22">${ic}</svg></div>`)}
        </div>
      </div>

      <div class="tip">
        <div class="tip-title">宏磊股份
          <div class="tip-close"><svg width="11" height="11">${closeX}</svg></div>
        </div>
        <div class="tip-body">
          ${TIP_ROWS.map(([k, v, c]) => html`<div class="tip-row"><span class="k">${k}</span><span class="val ${c}">${v}</span></div>`)}
        </div>
      </div>
    `;
  }
}
